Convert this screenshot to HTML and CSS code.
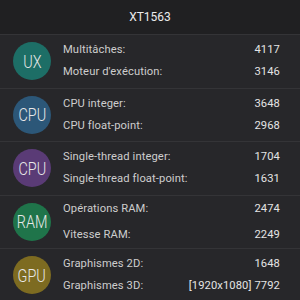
FILE: index.html
```html
<!DOCTYPE html>
<html lang="fr">
<head>
    <meta charset="UTF-8">
    <meta name="viewport" content="width=device-width, initial-scale=1.0">
    <title>XT1563</title>
    <link rel="stylesheet" href="styles.css">
</head>
<body>
    <div class="header">XT1563</div>

    <div class="row">
        <div class="badge ux"><span>UX</span></div>
        <div class="scores">
            <div class="line"><span>Multitâches:</span><span class="num">4117</span></div>
            <div class="line"><span>Moteur d'exécution:</span><span class="num">3146</span></div>
        </div>
    </div>

    <div class="row">
        <div class="badge cpu"><span>CPU</span></div>
        <div class="scores">
            <div class="line"><span>CPU integer:</span><span class="num">3648</span></div>
            <div class="line"><span>CPU float-point:</span><span class="num">2968</span></div>
        </div>
    </div>

    <div class="row">
        <div class="badge single"><span>CPU</span></div>
        <div class="scores">
            <div class="line"><span>Single-thread integer:</span><span class="num">1704</span></div>
            <div class="line"><span>Single-thread float-point:</span><span class="num">1631</span></div>
        </div>
    </div>

    <div class="row">
        <div class="badge ram"><span>RAM</span></div>
        <div class="scores wide">
            <div class="line"><span>Opérations RAM:</span><span class="num">2474</span></div>
            <div class="line"><span>Vitesse RAM:</span><span class="num">2249</span></div>
        </div>
    </div>

    <div class="row">
        <div class="badge gpu"><span>GPU</span></div>
        <div class="scores">
            <div class="line"><span>Graphismes 2D:</span><span class="num">1648</span></div>
            <div class="line"><span>Graphismes 3D:</span><span class="num">[1920x1080] 7792</span></div>
        </div>
    </div>
</body>
</html>
```

FILE: styles.css
```css
body {
    margin: 0;
    padding: 0;
    background-color: #27272a;
    font-family: Roboto, "Liberation Sans", sans-serif;
    color: #cdcdcd;
    overflow: hidden;
}
.header {
    height: 34px;
    line-height: 34px;
    text-align: center;
    background-color: #202022;
    color: #ececec;
    font-size: 12px;
}
.row {
    box-sizing: border-box;
    height: 53.5px;
    border-top: 1px solid #343437;
    display: flex;
    align-items: center;
    padding: 0 20px 0 13px;
}
.badge {
    width: 38px;
    height: 38px;
    border-radius: 50%;
    flex-shrink: 0;
    display: flex;
    align-items: center;
    justify-content: center;
    color: #e8e8e8;
    font-size: 18px;
    font-weight: 300;
    margin-right: 12px;
}
.badge span {
    display: inline-block;
    transform: scaleX(0.8);
}
.ux { background: #1d6e66; }
.cpu { background: #2c5778; }
.single { background: #5a3b76; }
.ram { background: #1f744a; }
.gpu { background: #7d6b21; }
.scores {
    flex: 1;
    display: flex;
    flex-direction: column;
}
.scores.wide {
    gap: 4px;
}
.line {
    display: flex;
    justify-content: space-between;
    height: 22px;
    line-height: 22px;
    font-size: 11.2px;
    letter-spacing: 0.1px;
}
.num {
    color: #e4e4e4;
}
```
